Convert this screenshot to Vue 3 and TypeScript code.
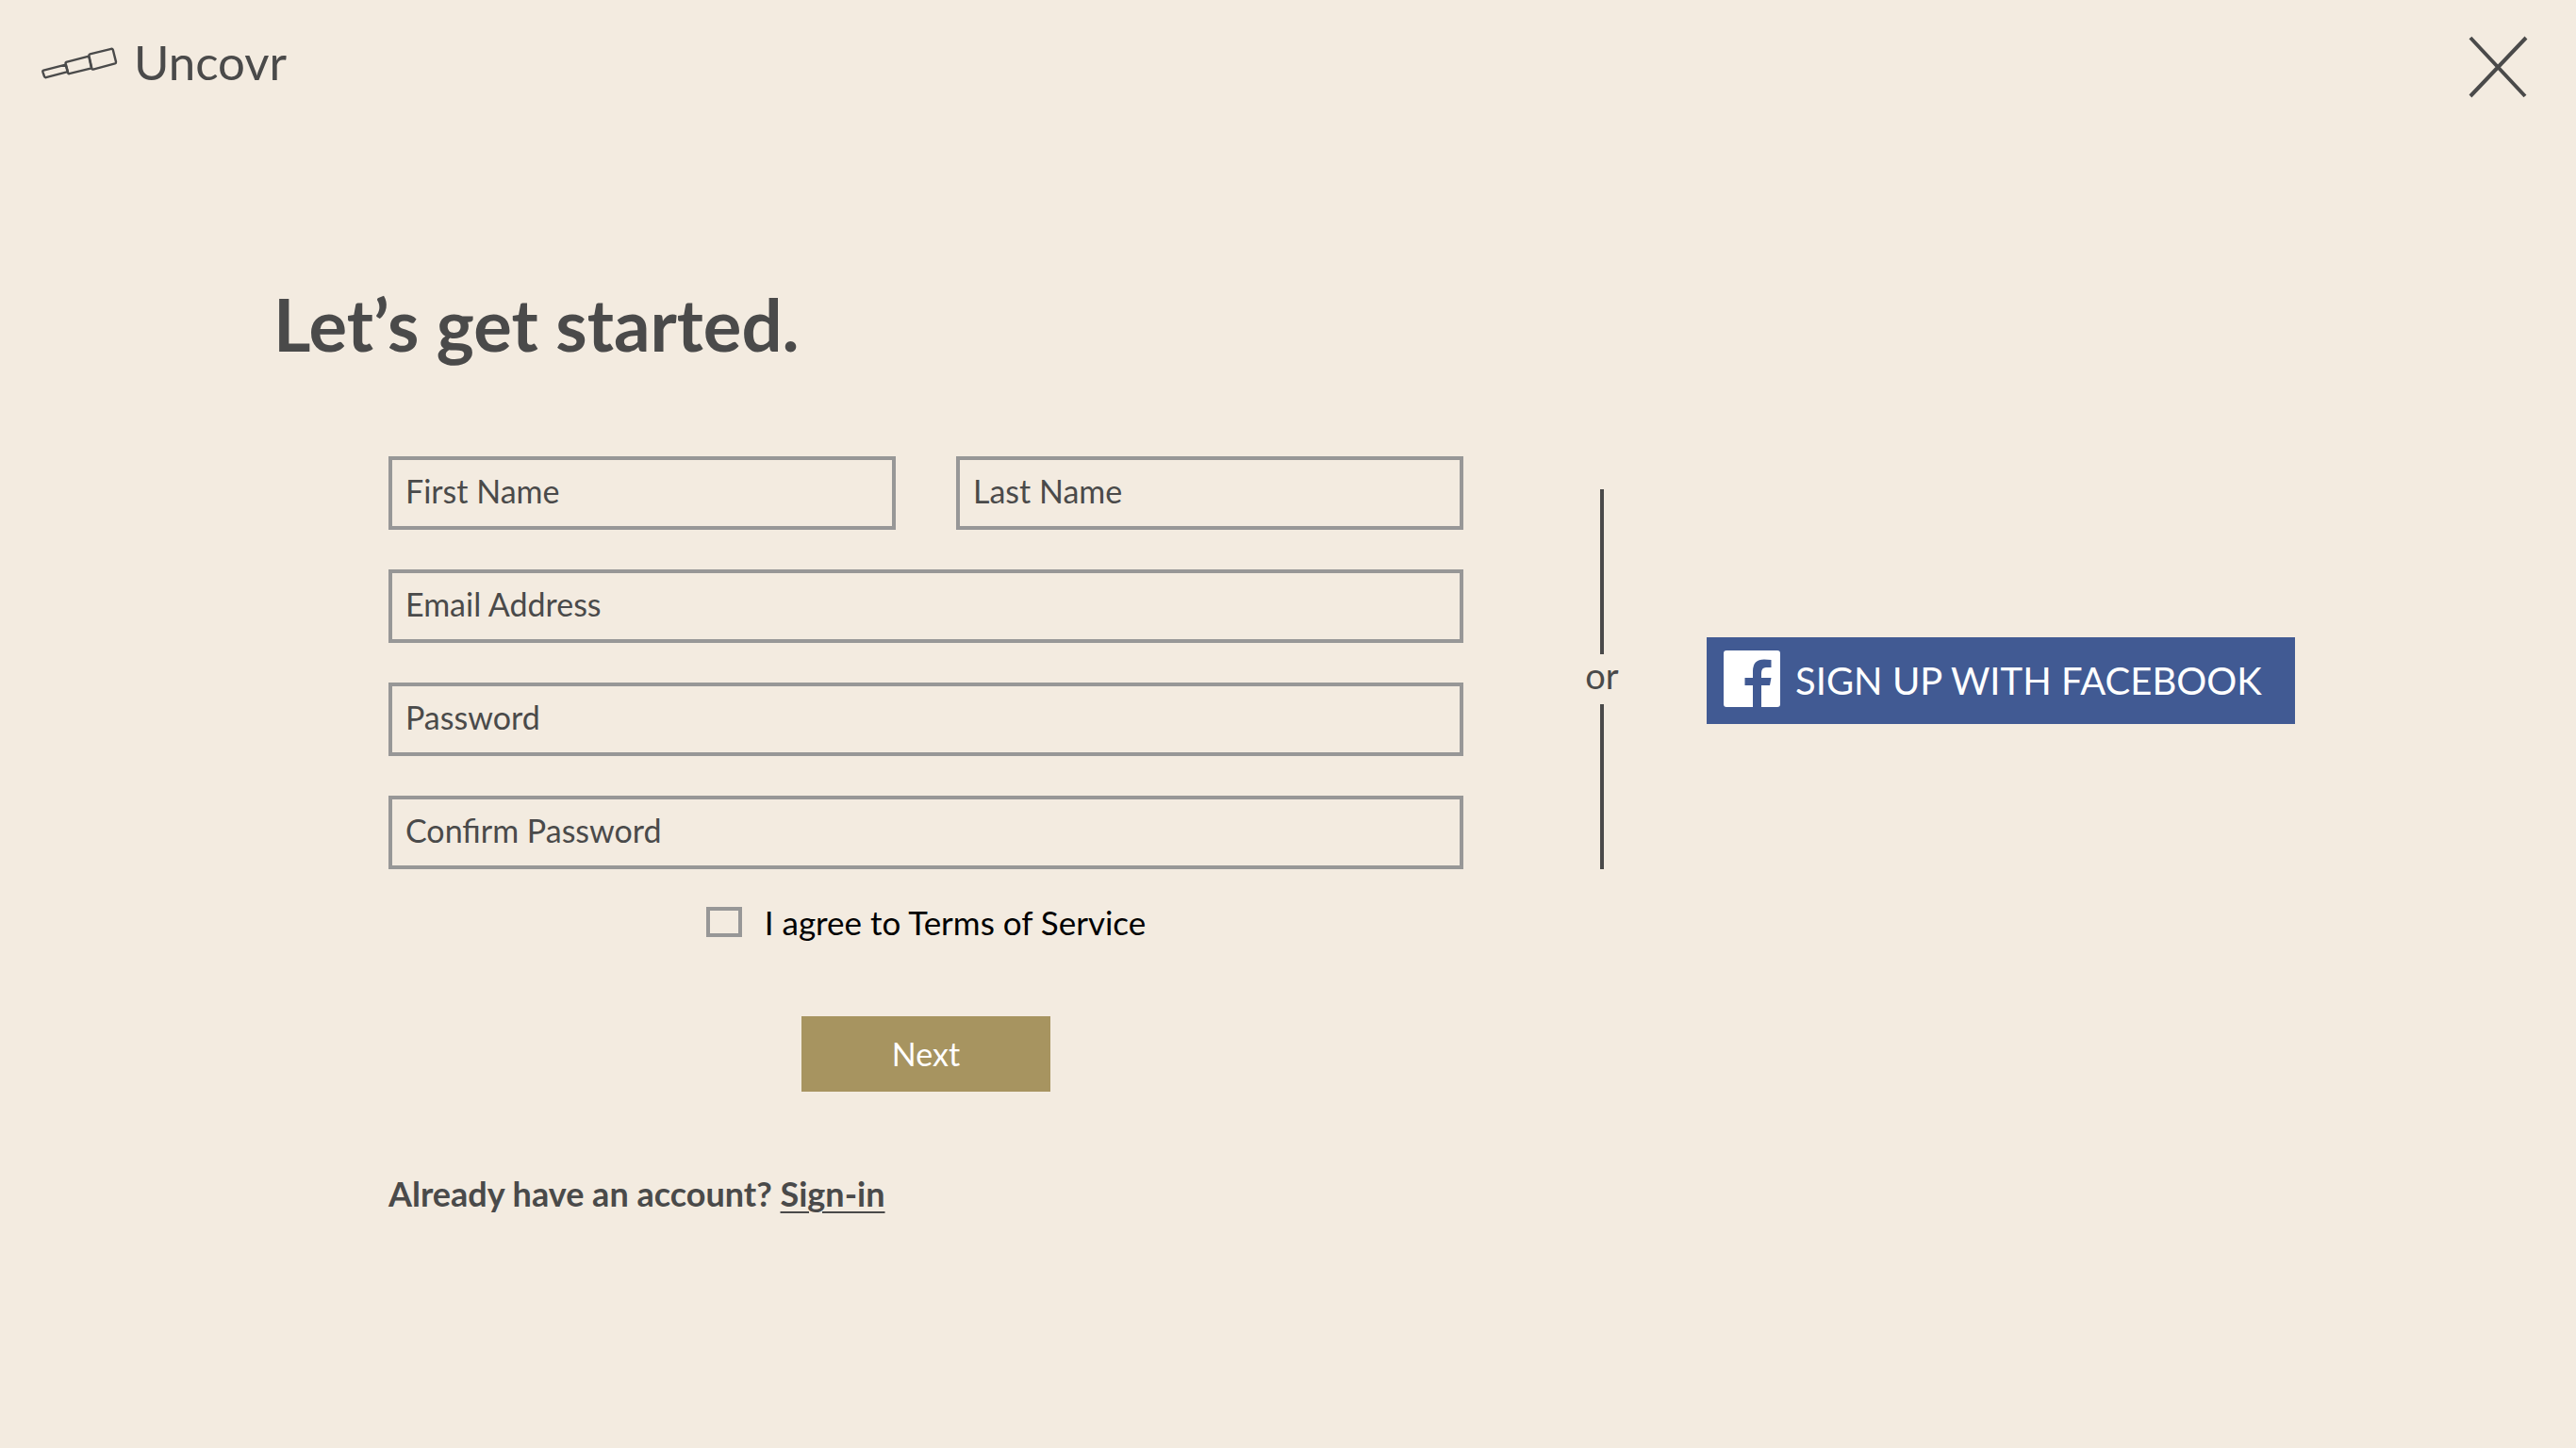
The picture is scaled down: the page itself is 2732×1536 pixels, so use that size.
<script setup lang="ts">
import { reactive } from 'vue'

interface Field {
  id: 'firstName' | 'lastName' | 'email' | 'password' | 'confirm'
  label: string
  type: string
  half?: boolean
}

const fields: Field[] = [
  { id: 'firstName', label: 'First Name', type: 'text', half: true },
  { id: 'lastName', label: 'Last Name', type: 'text', half: true },
  { id: 'email', label: 'Email Address', type: 'email' },
  { id: 'password', label: 'Password', type: 'password' },
  { id: 'confirm', label: 'Confirm Password', type: 'password' },
]

const form = reactive({
  firstName: '',
  lastName: '',
  email: '',
  password: '',
  confirm: '',
  agreed: false,
})
</script>

<template>
  <div class="page">
    <header class="topbar">
      <a class="brand" href="#">
        <svg class="brand-icon" viewBox="-1 -2 82 36" aria-hidden="true">
          <g fill="none" stroke="#4a4a4a" stroke-width="2.4" stroke-linejoin="round">
            <path d="M3.2 24.6 26.6 18.6 28.8 26.2 5.8 32.2Q4.4 32.4 4 31L2.4 26.4Q2 25 3.2 24.6Z" />
            <path d="M27.2 15.8 51.2 9.6 54 22.4 30.4 28.2Q29.4 28.4 29.2 27.4L26.6 17.4Q26.2 16.2 27.2 15.8Z" />
            <path d="M52.4 7.4 75 1.8Q76.4 1.6 76.8 2.8L80 15.6Q80.2 17 79 17.4L55.8 23.6Q54.8 23.8 54.4 22.8L51.4 9.2Q51.2 7.8 52.4 7.4Z" />
          </g>
        </svg>
        <span>Uncovr</span>
      </a>
      <button class="close" type="button" aria-label="Close">
        <svg viewBox="0 0 64 66" aria-hidden="true">
          <path d="M2 2 60 64M61 2 2 64" fill="none" stroke="#4a4a4a" stroke-width="4" />
        </svg>
      </button>
    </header>

    <main class="content">
      <h1>Let’s get started.</h1>

      <div class="columns">
        <form class="signup" @submit.prevent>
          <div class="fields">
            <div v-for="f in fields" :key="f.id" class="field" :class="{ half: f.half }">
              <input :id="f.id" v-model="form[f.id]" :type="f.type" />
              <label :for="f.id" :class="{ filled: form[f.id] }">{{ f.label }}</label>
            </div>
          </div>
          <div class="terms">
            <input id="agree" v-model="form.agreed" type="checkbox" />
            <label for="agree">I agree to Terms of Service</label>
          </div>
          <button class="next" type="submit">Next</button>
        </form>

        <div class="divider"><span>or</span></div>

        <div class="social">
          <button class="facebook" type="button">
            <svg viewBox="0 0 60 60" aria-hidden="true">
              <path
                fill="#fff"
                d="M3 0H57Q60 0 60 3V57Q60 60 57 60H40V37H49L50.500 29H40V24Q40 18 45 18H50.500V10Q47 9.600 43 9.600Q31 9.600 31 22V29H22.500V37H31V60H3Q0 60 0 57V3Q0 0 3 0Z"
              />
            </svg>
            <span>SIGN UP WITH FACEBOOK</span>
          </button>
        </div>
      </div>

      <p class="signin">Already have an account? <a href="#">Sign-in</a></p>
    </main>
  </div>
</template>

<style>
body {
  background: #f3ebe0;
}
</style>

<style scoped>
.page {
  min-height: 100vh;
  background: #f3ebe0;
  color: #4a4a4a;
  font-family: Lato, 'Open Sans', sans-serif;
  font-size: 34px;
  line-height: 40px;
}

.topbar {
  display: flex;
  justify-content: space-between;
  align-items: flex-start;
  padding: 36px 50px 0 42px;
}

.brand {
  display: flex;
  align-items: center;
  gap: 18px;
  color: inherit;
  font-size: 51px;
  line-height: 60px;
  text-decoration: none;
}

.brand-icon {
  width: 82px;
  height: 36px;
  overflow: visible;
}

button {
  border: 0;
  padding: 0;
  border-radius: 0;
  background: none;
  font: inherit;
  color: inherit;
  cursor: pointer;
}

.close {
  width: 64px;
  height: 68px;
  padding-top: 2px;
}

.close svg {
  display: block;
  width: 64px;
  height: 66px;
}

.content {
  padding: 196px 298px 0 290px;
}

h1 {
  margin: 0;
  font-size: 76px;
  line-height: 88px;
  font-weight: 700;
}

.columns {
  display: flex;
  align-items: flex-start;
  margin: 96px 0 0 122px;
}

.signup {
  flex: 1;
  min-width: 0;
  display: flex;
  flex-direction: column;
  align-items: center;
}

.fields {
  display: grid;
  grid-template-columns: 1fr 1fr;
  gap: 42px 64px;
  width: 100%;
}

.field {
  position: relative;
  grid-column: 1 / -1;
}

.field.half {
  grid-column: auto;
}

.field input {
  display: block;
  box-sizing: border-box;
  width: 100%;
  height: 78px;
  border: 4px solid #979797;
  border-radius: 0;
  padding: 0 14px 4px;
  background: none;
  font: inherit;
  color: #4a4a4a;
}

/* The label rests inside the empty box and steps aside once something is typed. */
.field label {
  position: absolute;
  top: 0;
  left: 18px;
  line-height: 74px;
  cursor: text;
}

.field label.filled {
  visibility: hidden;
}

.terms {
  display: flex;
  align-items: center;
  gap: 24px;
  margin-top: 36px;
  color: #000;
  font-size: 35px;
}

.terms input {
  appearance: none;
  width: 38px;
  height: 32px;
  margin: 0;
  border: 4px solid #979797;
}

.terms input:checked {
  background: #a79460;
}

.next {
  width: 264px;
  height: 80px;
  margin-top: 80px;
  background: #a79460;
  color: #fff;
}

.divider {
  display: flex;
  flex-direction: column;
  align-items: center;
  width: 38px;
  height: 403px;
  margin: 35px 92px 0 128px;
  font-size: 38px;
  line-height: 45px;
}

.divider span {
  padding-bottom: 8px;
}

.divider::before,
.divider::after {
  content: '';
  flex: 1;
  width: 4px;
  background: #4a4a4a;
}

.social {
  padding-top: 192px;
}

.facebook {
  display: flex;
  align-items: center;
  gap: 16px;
  width: 624px;
  height: 92px;
  padding: 14px 18px;
  background: #415a93;
  color: #fff;
  font-size: 40px;
  white-space: nowrap;
}

.facebook svg {
  align-self: flex-start;
  width: 60px;
  height: 60px;
}

.signin {
  margin: 88px 0 0 122px;
  font-size: 36px;
  font-weight: 700;
}

.signin a {
  color: inherit;
  text-decoration-thickness: 2px;
  text-underline-offset: 5px;
}
</style>
